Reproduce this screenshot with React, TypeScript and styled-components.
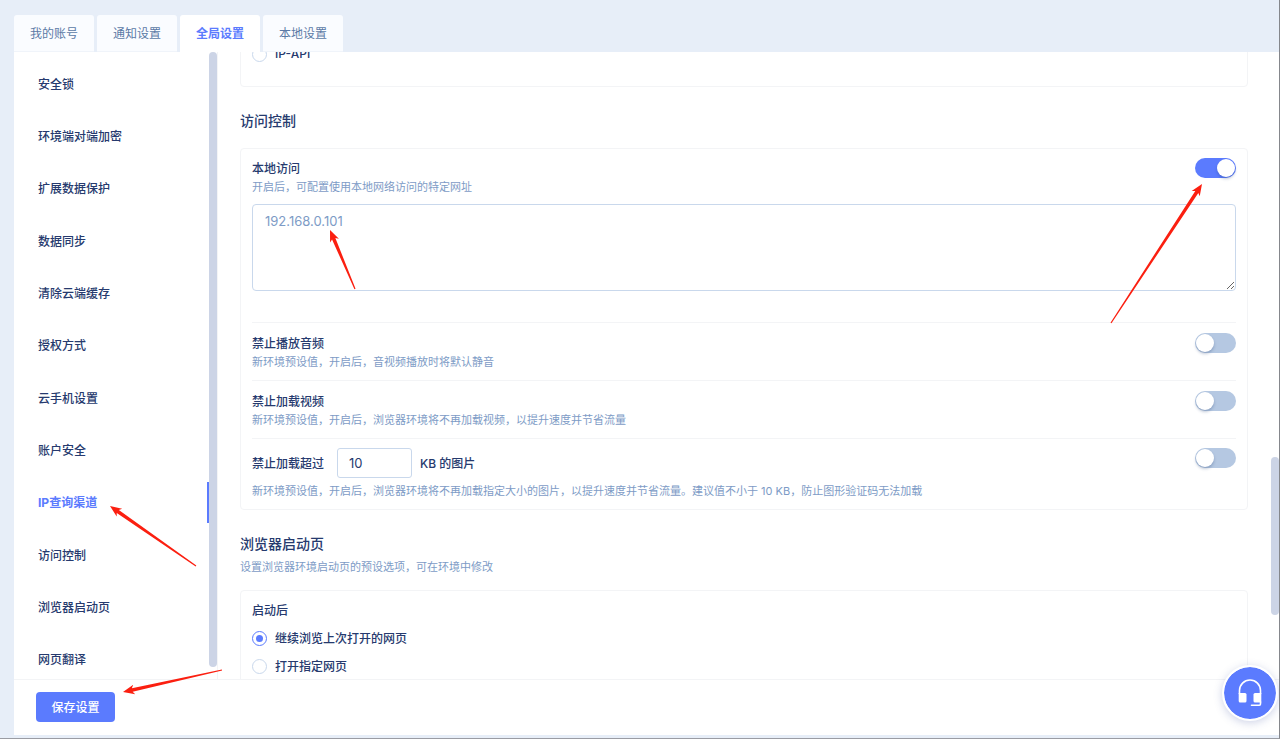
import React, { useLayoutEffect, useRef, useState } from "react";
import styled, { createGlobalStyle } from "styled-components";

const color = {
  page: "#e7eef8",
  text: "#263a6e",
  muted: "#7d9bc6",
  tab: "#5b7aa6",
  primary: "#5b7bfe",
  line: "#f3f4f6",
  field: "#c9d8ec",
  off: "#b5c8e2",
  thumb: "#ccd4e6",
  arrow: "#fb1f10",
};

const GlobalStyle = createGlobalStyle`
  *, *::before, *::after { box-sizing: border-box; }
  body {
    margin: 0;
    background: ${color.page};
    color: ${color.text};
    font-family: Inter, "Noto Sans CJK SC", sans-serif;
    font-size: 12px;
    font-weight: 500;
    line-height: 20px;
  }
  button, input, textarea { font: inherit; color: inherit; margin: 0; }
`;

const Window = styled.div`
  display: flex;
  flex-direction: column;
  height: 100vh;
  padding: 15px 0 3px 14px;
  border-right: 1px solid #85878c;
  border-bottom: 1px solid #9a9ca3;
`;

const Tabs = styled.nav`
  display: flex;
  gap: 3px;
`;

const Tab = styled.button<{ $active?: boolean }>`
  width: 80px;
  height: 37px;
  padding: 2px 0 0;
  border: 0;
  border-bottom: 1px solid ${(p) => (p.$active ? "#fff" : "#f0f4fa")};
  border-radius: 3px 3px 0 0;
  background: ${(p) => (p.$active ? "#fff" : "#fafcff")};
  color: ${(p) => (p.$active ? color.primary : color.tab)};
  font-weight: ${(p) => (p.$active ? 700 : 400)};
  cursor: pointer;
`;

const Panel = styled.div`
  flex: 1;
  min-height: 0;
  display: flex;
  flex-direction: column;
  background: #fff;
`;

const Columns = styled.div`
  flex: 1;
  min-height: 0;
  display: flex;
`;

const Sidebar = styled.ul`
  width: 195px;
  margin: 0 0 -1px;
  padding: 11px 0 0;
  list-style: none;
  display: flex;
  flex-direction: column;
  justify-content: space-between;
`;

const SidebarItem = styled.li`
  position: relative;
`;

const SidebarLink = styled.a<{ $active?: boolean }>`
  display: flex;
  align-items: center;
  height: 41px;
  padding: 2px 0 0 24px;
  border-right: 2px solid ${(p) => (p.$active ? color.primary : "transparent")};
  color: ${(p) => (p.$active ? color.primary : color.text)};
  font-weight: ${(p) => (p.$active ? 700 : 500)};
  text-decoration: none;
`;

const Track = styled.div`
  width: 9px;
  padding-bottom: 12px;
  display: flex;
  flex-direction: column;
  border-right: 1px solid ${color.line};
`;

const Thumb = styled.div`
  flex: 1;
  width: 8px;
  border-radius: 4px;
  background: ${color.thumb};
`;

const MainTrack = styled.div`
  width: 8px;
  display: grid;
  grid-template-rows: 405fr 158fr 64fr;
`;

const MainThumb = styled(Thumb)`
  grid-row: 2;
`;

const Scroller = styled.main`
  flex: 1;
  min-width: 0;
  overflow-y: auto;
  scrollbar-width: none;
  padding: 24px 23px 24px 22px;
`;

const Heading = styled.h2`
  margin: 24px 0 0;
  font-size: 14px;
  line-height: 20px;
  font-weight: 500;
`;

const Desc = styled.p`
  margin: 0;
  font-size: 11px;
  font-weight: 400;
  color: ${color.muted};
`;

const HeadingDesc = styled(Desc)`
  margin-top: 3px;
`;

const Card = styled.section<{ $gap?: number }>`
  margin-top: ${(p) => p.$gap ?? 0}px;
  border: 1px solid ${color.line};
  border-radius: 4px;
  padding: 0 11px;
`;

const RadioCard = styled(Card)`
  padding: 10px 11px 18px;
`;

const Row = styled.div`
  padding: 10px 0 8px;
  border-top: 1px solid ${color.line};

  &:first-child {
    border-top: 0;
    padding: 9px 0 31px;
  }
`;

const InputRow = styled(Row)`
  padding-top: 9px;
`;

const RowHead = styled.div`
  display: flex;
  justify-content: space-between;
  align-items: flex-start;
  height: 19px;
  line-height: 22px;
`;

const InputRowHead = styled(RowHead)`
  height: 30px;
  margin-bottom: 3px;
  line-height: 20px;
`;

const SizeLine = styled.div`
  display: flex;
  align-items: center;
  gap: 8px;
`;

const LineText = styled.span`
  padding-top: 2px;
`;

const SizeInput = styled.input`
  width: 75px;
  height: 30px;
  margin-left: 5px;
  padding: 0 11px;
  border: 1px solid ${color.field};
  border-radius: 3px;
  background: #fff;
  font-size: 13px;
  font-weight: 400;
  outline: none;
`;

const SwitchBox = styled.span`
  position: relative;
  display: flex;
`;

const Switch = styled.input`
  appearance: none;
  display: flex;
  align-items: center;
  width: 41px;
  height: 20px;
  padding: 0 1px;
  border-radius: 10px;
  background: ${color.off};
  cursor: pointer;

  &::before {
    content: "";
    width: 18px;
    height: 18px;
    border-radius: 50%;
    background: #fff;
    box-shadow: 0 2px 3px rgba(40, 70, 120, 0.3);
  }

  &:checked {
    justify-content: flex-end;
    background: ${color.primary};
  }
`;

const AddressBox = styled.div`
  position: relative;
  margin-top: 7px;
`;

const AddressArea = styled.textarea`
  display: block;
  width: 100%;
  height: 87px;
  padding: 6px 12px;
  border: 1px solid ${color.field};
  border-radius: 4px;
  background: #fff;
  font-size: 13px;
  font-weight: 400;
  outline: none;
  resize: vertical;

  &::placeholder {
    color: ${color.muted};
  }
`;

const Options = styled.div`
  margin-top: 3px;
`;

const Option = styled.label`
  display: flex;
  align-items: center;
  gap: 8px;
  height: 28px;
  cursor: pointer;
`;

const Radio = styled.input`
  appearance: none;
  display: grid;
  place-items: center;
  width: 15px;
  height: 15px;
  border: 1px solid ${color.field};
  border-radius: 50%;

  &:checked {
    border-color: ${color.primary};
  }

  &:checked::before {
    content: "";
    width: 7px;
    height: 7px;
    border-radius: 50%;
    background: ${color.primary};
  }
`;

const Footer = styled.footer`
  display: flex;
  align-items: center;
  height: 56px;
  padding: 0 0 2px 22px;
  border-top: 1px solid ${color.line};
  background: #fff;
`;

const SaveBox = styled.span`
  position: relative;
  display: flex;
`;

const SaveButton = styled.button`
  width: 79px;
  height: 30px;
  padding: 2px 0 0;
  border: 0;
  border-radius: 4px;
  background: ${color.primary};
  color: #fff;
  cursor: pointer;
`;

const SupportButton = styled.button`
  position: fixed;
  right: 2px;
  bottom: 18px;
  display: grid;
  place-items: center;
  width: 56px;
  height: 56px;
  padding: 0;
  border: 2px solid #fff;
  border-radius: 50%;
  background: ${color.primary};
  background-clip: padding-box;
  box-shadow: 0 2px 8px rgba(60, 80, 160, 0.25);
  cursor: pointer;
`;

const ArrowSvg = styled.svg`
  position: absolute;
  top: 0;
  left: 0;
  width: 1px;
  height: 1px;
  overflow: visible;
  pointer-events: none;
  z-index: 2;
`;

type Point = [number, number];

/* Tapered pointer: thin at the tail, barbed at the tip. */
function Arrow({ tip, tail }: { tip: Point; tail: Point }) {
  const dx = tip[0] - tail[0];
  const dy = tip[1] - tail[1];
  const length = Math.hypot(dx, dy);
  const ux = dx / length;
  const uy = dy / length;
  const at = (back: number, side: number) =>
    `${tip[0] - ux * back - uy * side},${tip[1] - uy * back + ux * side}`;
  const points = [
    at(0, 0),
    at(11.5, 4.8),
    at(9.5, 1.8),
    at(length, 0.6),
    at(length, -0.6),
    at(9.5, -1.8),
    at(11.5, -4.8),
  ].join(" ");
  return (
    <ArrowSvg aria-hidden="true">
      <polygon points={points} fill={color.arrow} />
    </ArrowSvg>
  );
}

function Headset() {
  return (
    <svg width="28" height="30" viewBox="0 0 28 30" aria-hidden="true">
      <path
        d="M3.500 16v-3.500a10.500 10.500 0 0 1 21 0V16"
        fill="none"
        stroke="#fff"
        strokeWidth="1.6"
      />
      <path
        d="M2.700 15h6.300a1.500 1.500 0 0 1 1.500 1.500v6.500a1.500 1.500 0 0 1-1.500 1.500h-4.800a1.500 1.500 0 0 1-1.500-1.500z"
        fill="#fff"
      />
      <path
        d="M25.300 15h-6.300a1.500 1.500 0 0 0-1.500 1.500v6.500a1.500 1.500 0 0 0 1.500 1.500h6.300z"
        fill="#fff"
      />
      <path
        d="M24.500 24v2a1.200 1.200 0 0 1-1.200 1.200H15.500"
        fill="none"
        stroke="#fff"
        strokeWidth="1.600"
        strokeLinecap="round"
      />
    </svg>
  );
}

const tabs = ["我的账号", "通知设置", "全局设置", "本地设置"];

const sections = [
  "安全锁",
  "环境端对端加密",
  "扩展数据保护",
  "数据同步",
  "清除云端缓存",
  "授权方式",
  "云手机设置",
  "账户安全",
  "IP查询渠道",
  "访问控制",
  "浏览器启动页",
  "网页翻译",
];

const mediaRules = [
  { id: "audio", title: "禁止播放音频", desc: "新环境预设值，开启后，音视频播放时将默认静音" },
  { id: "video", title: "禁止加载视频", desc: "新环境预设值，开启后，浏览器环境将不再加载视频，以提升速度并节省流量" },
];

export default function App() {
  const scroller = useRef<HTMLElement>(null);
  const [tab, setTab] = useState("全局设置");
  const [section, setSection] = useState("IP查询渠道");

  useLayoutEffect(() => {
    if (scroller.current) scroller.current.scrollTop = 47;
  }, []);

  return (
    <>
      <GlobalStyle />
      <Window>
        <Tabs>
          {tabs.map((name) => (
            <Tab key={name} type="button" $active={name === tab} onClick={() => setTab(name)}>
              {name}
            </Tab>
          ))}
        </Tabs>
        <Panel>
          <Columns>
            <Sidebar>
              {sections.map((name) => (
                <SidebarItem key={name}>
                  <SidebarLink href="#" $active={name === section} onClick={() => setSection(name)}>
                    {name}
                  </SidebarLink>
                  {name === "IP查询渠道" && <Arrow tip={[96, 24]} tail={[182, 84]} />}
                </SidebarItem>
              ))}
            </Sidebar>
            <Track aria-hidden="true">
              <Thumb />
            </Track>
            <Scroller ref={scroller}>
              <RadioCard>
                <Option>
                  <Radio type="radio" name="channel" />
                  <span>IP-API</span>
                </Option>
              </RadioCard>

              <Heading>访问控制</Heading>
              <Card $gap={17}>
                <Row>
                  <RowHead>
                    <label htmlFor="local">本地访问</label>
                    <SwitchBox>
                      <Switch id="local" type="checkbox" role="switch" defaultChecked />
                      <Arrow tip={[7, 26]} tail={[-84, 165]} />
                    </SwitchBox>
                  </RowHead>
                  <Desc>开启后，可配置使用本地网络访问的特定网址</Desc>
                  <AddressBox>
                    <AddressArea aria-label="本地访问" placeholder="192.168.0.101" />
                    <Arrow tip={[78, 26]} tail={[103, 85]} />
                  </AddressBox>
                </Row>
                {mediaRules.map((rule) => (
                  <Row key={rule.id}>
                    <RowHead>
                      <label htmlFor={rule.id}>{rule.title}</label>
                      <Switch id={rule.id} type="checkbox" role="switch" />
                    </RowHead>
                    <Desc>{rule.desc}</Desc>
                  </Row>
                ))}
                <InputRow>
                  <InputRowHead>
                    <SizeLine>
                      <LineText as="label" htmlFor="size">
                        禁止加载超过
                      </LineText>
                      <SizeInput id="size" type="text" defaultValue="10" />
                      <LineText>KB 的图片</LineText>
                    </SizeLine>
                    <Switch type="checkbox" role="switch" aria-label="禁止加载超过" />
                  </InputRowHead>
                  <Desc>
                    新环境预设值，开启后，浏览器环境将不再加载指定大小的图片，以提升速度并节省流量。建议值不小于 10 KB，防止图形验证码无法加载
                  </Desc>
                </InputRow>
              </Card>

              <Heading>浏览器启动页</Heading>
              <HeadingDesc>设置浏览器环境启动页的预设选项，可在环境中修改</HeadingDesc>
              <RadioCard $gap={13}>
                <div>启动后</div>
                <Options>
                  <Option>
                    <Radio type="radio" name="startup" defaultChecked />
                    <LineText>继续浏览上次打开的网页</LineText>
                  </Option>
                  <Option>
                    <Radio type="radio" name="startup" />
                    <LineText>打开指定网页</LineText>
                  </Option>
                </Options>
              </RadioCard>
            </Scroller>
            <MainTrack aria-hidden="true">
              <MainThumb />
            </MainTrack>
          </Columns>
          <Footer>
            <SaveBox>
              <SaveButton type="button">保存设置</SaveButton>
              <Arrow tip={[87, 0]} tail={[186, -22]} />
            </SaveBox>
          </Footer>
        </Panel>
      </Window>
      <SupportButton type="button" aria-label="客服">
        <Headset />
      </SupportButton>
    </>
  );
}
